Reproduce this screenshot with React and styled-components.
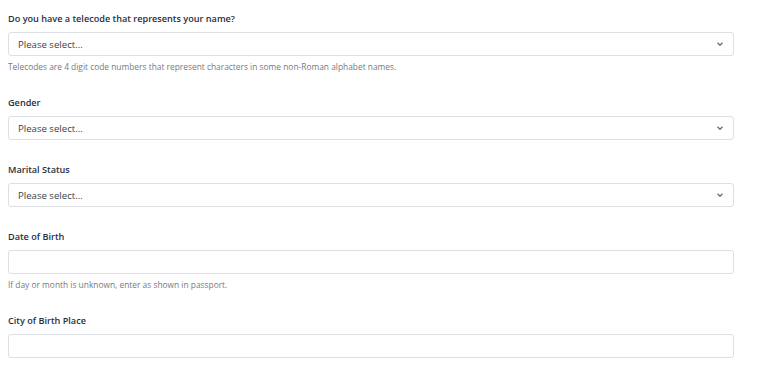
import React from "react";
import styled, { createGlobalStyle } from "styled-components";

const GlobalStyle = createGlobalStyle`
  body {
    margin: 0;
    background: #ffffff;
    font-family: "Open Sans", "Liberation Sans", sans-serif;
  }
`;

const Form = styled.div`
  padding: 12px 0 0 8px;
  width: 726px;
`;

const Field = styled.div`
  display: flex;
  flex-direction: column;
  margin-bottom: 23px;
`;

const Label = styled.label`
  font-size: 9.15px;
  line-height: 14px;
  font-weight: 600;
  color: #28303d;
  margin-bottom: 6px;
`;

const Box = styled.div`
  box-sizing: border-box;
  height: 24px;
  border: 1px solid #dcdfe3;
  border-radius: 3px;
  background: #fff;
  display: flex;
  align-items: center;
  justify-content: space-between;
  padding: 0 9px;
  cursor: ${(p) => (p.$select ? "pointer" : "text")};
`;

const Placeholder = styled.span`
  font-size: 9.6px;
  color: #3a3f47;
`;

const Help = styled.p`
  margin: 5px 0 0;
  font-size: 8.4px;
  line-height: 12px;
  color: #767b82;
`;

function Chevron() {
  return (
    <svg width="8" height="6" viewBox="0 0 8 6">
      <path d="M1.5 1.8 L4 4.2 L6.5 1.8" fill="none" stroke="#6c7078" strokeWidth="1.4" />
    </svg>
  );
}

const fields = [
  {
    label: "Do you have a telecode that represents your name?",
    select: true,
    help: "Telecodes are 4 digit code numbers that represent characters in some non-Roman alphabet names.",
  },
  { label: "Gender", select: true },
  { label: "Marital Status", select: true },
  { label: "Date of Birth", help: "If day or month is unknown, enter as shown in passport." },
  { label: "City of Birth Place" },
];

export default function App() {
  return (
    <>
      <GlobalStyle />
      <Form>
        {fields.map((f) => (
          <Field key={f.label}>
            <Label>{f.label}</Label>
            <Box $select={f.select}>
              {f.select && <Placeholder>Please select...</Placeholder>}
              {f.select && <Chevron />}
            </Box>
            {f.help && <Help>{f.help}</Help>}
          </Field>
        ))}
      </Form>
    </>
  );
}
